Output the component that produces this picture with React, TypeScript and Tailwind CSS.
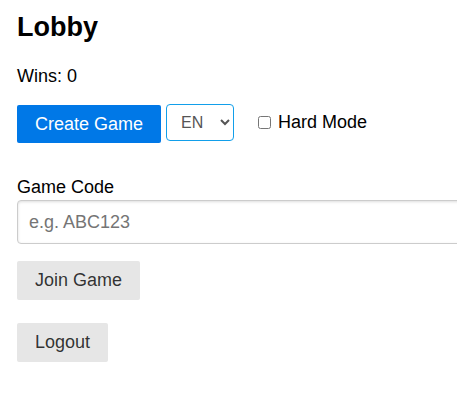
import { useState } from "react";

export default function App() {
  const [lang, setLang] = useState("en");
  const [hard, setHard] = useState(false);
  const [code, setCode] = useState("");

  return (
    <div className="min-h-screen w-full overflow-hidden bg-white font-['Liberation_Sans',Arial,sans-serif] text-black">
      <div className="flex w-[520px] flex-col items-start pl-[17px] pt-[12px] text-[18px]">
        <h2 className="text-[27px] font-bold leading-[31px]">Lobby</h2>
        <p className="mt-[23px] leading-[21px]">Wins: 0</p>

        <div className="mt-[17px] flex items-start">
          <button className="mt-[1px] h-[38px] rounded-[2px] bg-[#0078e7] px-[18px] leading-[21px] text-white">
            Create Game
          </button>
          <select
            value={lang}
            onChange={(e) => setLang(e.target.value)}
            className="ml-[5px] h-[37px] w-[68px] rounded-[4px] border border-[#129fea] bg-white px-[10px] text-[16px] text-[#555]"
          >
            <option value="en">EN</option>
            <option value="de">DE</option>
          </select>
          <label className="ml-[24px] mt-[8px] flex items-center leading-[21px]">
            <input
              type="checkbox"
              checked={hard}
              onChange={(e) => setHard(e.target.checked)}
              className="mr-[7px] h-[13px] w-[13px]"
            />
            Hard Mode
          </label>
        </div>

        <label className="mt-[34px] leading-[21px]">Game Code</label>
        <input
          value={code}
          onChange={(e) => setCode(e.target.value)}
          placeholder="e.g. ABC123"
          className="mt-[2px] h-[44px] w-[480px] rounded-[4px] border border-[#ccc] px-[11px] shadow-[inset_0_1px_3px_#ddd] outline-none placeholder:text-[#757575]"
        />

        <button className="mt-[17px] h-[39px] rounded-[2px] bg-[#e6e6e6] px-[18px] leading-[21px] text-black/80">
          Join Game
        </button>
        <button className="mt-[23px] h-[39px] rounded-[2px] bg-[#e6e6e6] px-[18px] leading-[21px] text-black/80">
          Logout
        </button>
      </div>
    </div>
  );
}
